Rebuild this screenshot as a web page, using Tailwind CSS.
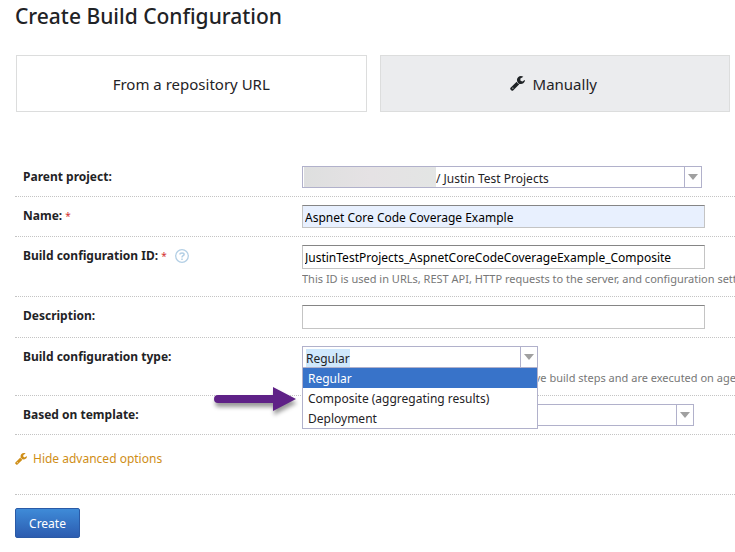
<!DOCTYPE html>
<html lang="en">
<head>
<meta charset="utf-8">
<meta name="viewport" content="width=device-width, initial-scale=1">
<title>Create Build Configuration</title>
<script src="https://cdn.jsdelivr.net/npm/@tailwindcss/browser@4"></script>
</head>
<body class="bg-white font-['Noto_Sans','Open_Sans',sans-serif] text-[12px] leading-5 text-[#1f2326] overflow-x-hidden">
<svg class="hidden" aria-hidden="true">
  <symbol id="wrench" viewBox="0 0 1664 1664">
    <path fill="currentColor" transform="translate(0 1408) scale(1 -1)" d="M384 64q0 26-19 45t-45 19-45-19-19-45 19-45 45-19 45 19 19 45zm644 420l-682-682q-37-37-90-37-52 0-91 37L59-90Q21-54 21 0q0 53 38 91l681 681q39-98 114.500-173.500T1028 484zm634 435q0-39-23-106-47-134-164.500-217.500T1216 512q-185 0-316.500 131.500T768 960t131.500 316.500T1216 1408q58 0 121.500-16.500T1445 1345q16-11 16-28t-16-28l-293-169V896l193-107q5 3 79 48.500t135.500 81T1630 954q15 0 23.500-10t8.500-25z"/>
  </symbol>
</svg>
<main class="pl-[15px]">
  <h1 class="pt-[2px] text-[21px] leading-7 font-medium">Create Build Configuration</h1>
  <nav class="mt-[25px] ml-px mr-[5px] grid grid-cols-2 gap-[13px] text-[15px]">
    <button type="button" class="h-[57px] border border-[#dcdddd] bg-white">From a repository URL</button>
    <button type="button" class="flex h-[57px] items-center justify-center gap-2 border border-[#dcdddd] bg-[#ebecee] pr-[3px]"><svg class="size-[15px]"><use href="#wrench"/></svg>Manually</button>
  </nav>
  <form class="mt-[46px]">
    <div class="grid grid-cols-[287px_1fr] border-b border-dotted border-[#c4c4c4] py-2">
      <label for="parent" class="pt-px pl-2 font-bold">Parent project:</label>
      <div class="relative h-[22px] w-[400px]">
        <select id="parent" class="block h-[22px] w-full appearance-none border border-[#b1b1cb] bg-white pt-[3px] pl-[133px] text-[12px] leading-[17px] text-[#1f2326]"><option>/ Justin Test Projects</option></select>
        <span class="absolute top-px left-[2px] h-5 w-[132px] bg-linear-to-r from-[#dedfdf] via-[#e5e2e4] to-[#e3e5e4]"></span>
        <span class="pointer-events-none absolute top-0 right-0 flex h-[22px] w-[18px] items-center justify-center border border-[#b1b1cb]"><svg class="h-[6px] w-[10px]" viewBox="0 0 10 6"><path fill="#a0a0a0" d="M0 0h10L5 6z"/></svg></span>
      </div>
    </div>
    <div class="grid grid-cols-[287px_1fr] border-b border-dotted border-[#c4c4c4] py-2">
      <label for="name" class="pt-px pl-2 font-bold">Name: <span class="text-[10px] font-normal text-[#d32f2f]">*</span></label>
      <input id="name" type="text" value="Aspnet Core Code Coverage Example" class="h-[23px] w-[403px] border border-[#c4c4c4] border-t-[#858585] bg-[#e8f0fe] px-[2px] pt-px text-black">
    </div>
    <div class="grid grid-cols-[287px_1fr] border-b border-dotted border-[#c4c4c4] py-2">
      <div class="flex items-center gap-2 self-start pl-2">
        <label for="config-id" class="pt-px font-bold">Build configuration ID: <span class="text-[10px] font-normal text-[#d32f2f]">*</span></label>
        <a href="#help" aria-label="Help"><svg class="size-[14px]" viewBox="0 0 14 14" fill="none" stroke="#b3cfe5"><circle cx="7" cy="7" r="6.300" stroke-width="1.300"/><path stroke-width="1.500" d="M4.900 5.500C5 3.300 9.100 3.400 9.100 5.400 9.100 6.700 7 6.600 7 8.400M7 9.400v1.500"/></svg></a>
      </div>
      <div class="min-w-0">
        <input id="config-id" type="text" value="JustinTestProjects_AspnetCoreCodeCoverageExample_Composite" class="block h-6 w-[403px] border border-[#c4c4c4] border-t-[#858585] px-[2px] pt-px text-black">
        <p class="h-[19px] overflow-hidden text-[11px] leading-5 whitespace-nowrap text-[#777]">This ID is used in URLs, REST API, HTTP requests to the server, and configuration settings in the TeamCity Data Directory.</p>
      </div>
    </div>
    <div class="grid grid-cols-[287px_1fr] border-b border-dotted border-[#c4c4c4] py-2">
      <label for="description" class="pt-px pl-2 font-bold">Description:</label>
      <input id="description" type="text" class="h-6 w-[403px] border border-[#c4c4c4] border-t-[#858585] px-[2px] pt-px text-black">
    </div>
    <div class="grid grid-cols-[287px_1fr] border-b border-dotted border-[#c4c4c4] py-2">
      <label for="type" class="pt-px pl-2 font-bold">Build configuration type:</label>
      <div class="relative min-w-0">
        <div class="relative h-[22px] w-[236px]">
          <span class="absolute top-[3px] left-1 h-[18px] w-11 bg-[#cfe8fc]"></span>
          <select id="type" class="relative block h-[22px] w-full appearance-none border border-[#b1b1cb] bg-transparent pt-[3px] pl-[3px] text-[12px] leading-[17px] text-[#1f2326]"><option>Regular</option><option>Composite (aggregating results)</option><option>Deployment</option></select>
          <span class="pointer-events-none absolute top-0 right-0 flex h-[22px] w-[18px] items-center justify-center border border-[#b1b1cb]"><svg class="h-[6px] w-[10px]" viewBox="0 0 10 6"><path fill="#a0a0a0" d="M0 0h10L5 6z"/></svg></span>
        </div>
        <p class="h-[19px] overflow-hidden text-[11px] leading-5 whitespace-nowrap text-[#777]">These regular build configurations usually have build steps and are executed on agents.</p>
        <ul role="listbox" aria-label="Build configuration type" class="absolute top-[21px] left-0 z-10 w-[236px] border border-[#b1b1cb] bg-white">
          <li role="option" aria-selected="true" class="bg-[#3873c9] pt-[2px] pl-[5px] leading-[18px] text-white">Regular</li>
          <li role="option" aria-selected="false" class="pt-[2px] pl-[5px] leading-[18px]">Composite (aggregating results)</li>
          <li role="option" aria-selected="false" class="pt-[2px] pl-[5px] leading-[18px]">Deployment</li>
        </ul>
        <svg class="absolute top-[38px] -left-[90px] z-20 h-[34px] w-[92px] drop-shadow-[1px_4px_2px_rgb(0_0_0/0.4)]" viewBox="0 0 92 34" aria-hidden="true"><path fill="#5f2187" d="M6 11h55V3l23 12-23 12v-8H6a4 4 0 0 1 0-8z"/></svg>
      </div>
    </div>
    <div class="grid grid-cols-[287px_1fr] border-b border-dotted border-[#c4c4c4] py-2">
      <label for="template" class="pt-px pl-2 font-bold">Based on template:</label>
      <div class="relative h-[22px] w-[392px]">
        <select id="template" class="block h-[22px] w-full appearance-none border border-[#b1b1cb] bg-white pl-[3px]"><option></option></select>
        <span class="pointer-events-none absolute top-0 right-0 flex h-[22px] w-[18px] items-center justify-center border border-[#b1b1cb]"><svg class="h-[6px] w-[10px]" viewBox="0 0 10 6"><path fill="#a0a0a0" d="M0 0h10L5 6z"/></svg></span>
      </div>
    </div>
    <div class="border-b border-dotted border-[#c4c4c4] pt-[14px] pb-[25px]">
      <a href="#options" class="inline-flex h-5 items-center gap-[6px] align-top text-[#cf8e17]"><svg class="size-3"><use href="#wrench"/></svg>Hide advanced options</a>
    </div>
    <button type="submit" class="mt-[13px] h-[30px] w-[65px] rounded-[2px] border border-[#2a5aa6] bg-linear-to-b from-[#3f8bd8] to-[#2c5cb0] pt-px text-white">Create</button>
  </form>
</main>
</body>
</html>
